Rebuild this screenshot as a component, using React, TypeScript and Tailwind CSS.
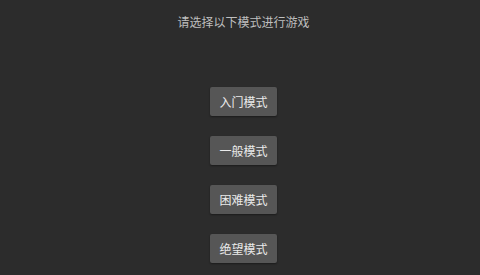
const modes = ["入门模式", "一般模式", "困难模式", "绝望模式"];

export default function App() {
  return (
    <div
      className="w-[480px] h-[275px] bg-[#2c2c2c] flex flex-col items-center pl-[7px] overflow-hidden"
      style={{ fontFamily: '"Noto Sans CJK SC", "Noto Sans", sans-serif' }}
    >
      <div className="mt-[13px] text-[12px] leading-[17px] text-[#bfbfbf]">请选择以下模式进行游戏</div>
      <div className="mt-[57px] flex flex-col items-center gap-[20px]">
        {modes.map((m) => (
          <button
            key={m}
            className="w-[67px] h-[29px] bg-[#565656] rounded-[2px] text-[12px] text-[#ebebeb] flex items-center justify-center shadow-[0_1px_2px_rgba(0,0,0,0.4)]"
          >
            {m}
          </button>
        ))}
      </div>
    </div>
  );
}
